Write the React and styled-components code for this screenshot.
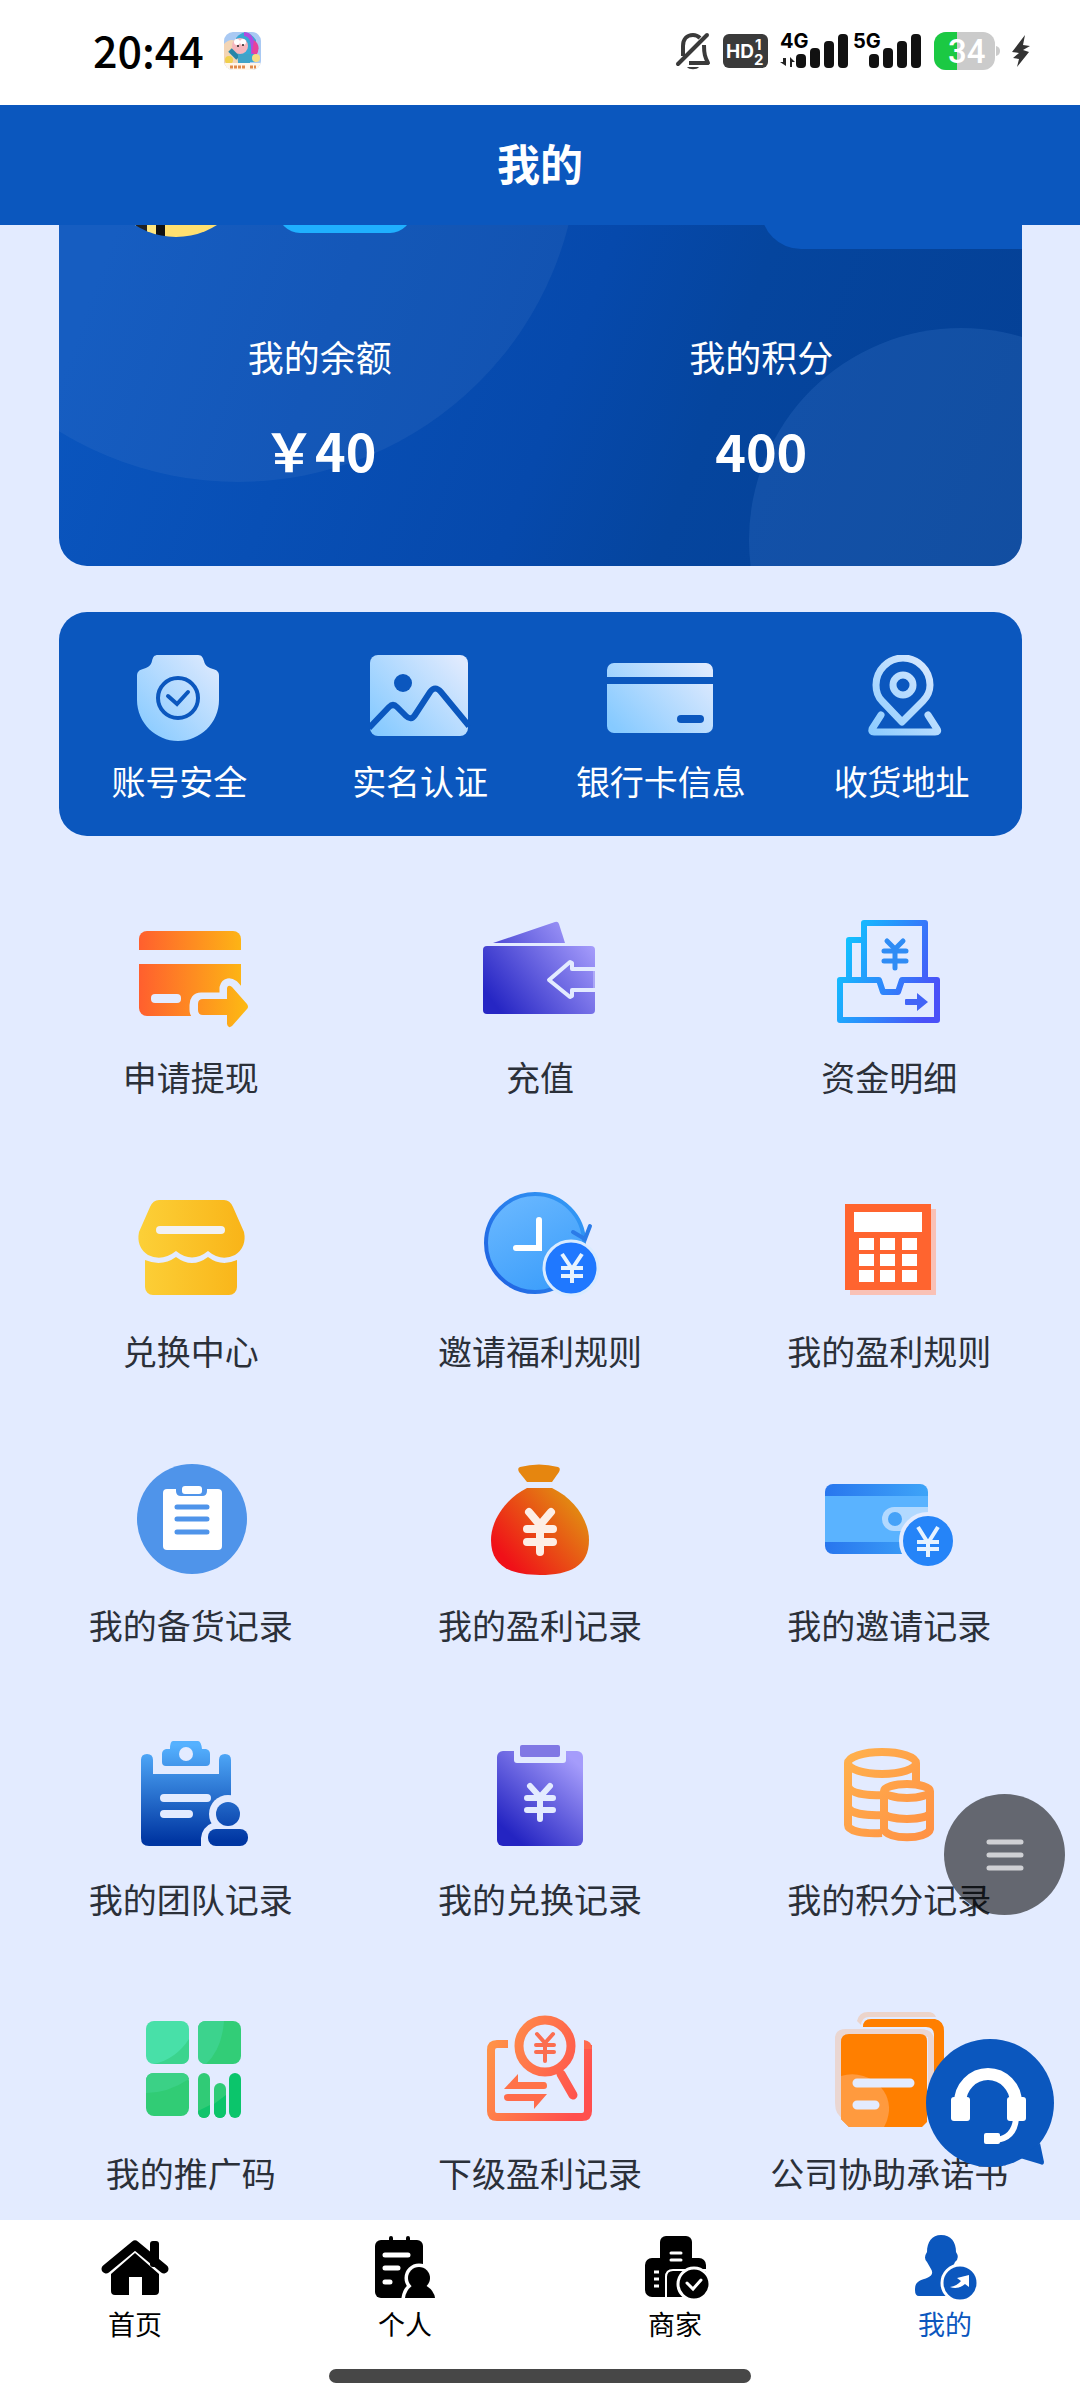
import React from "react";
import styled, { createGlobalStyle } from "styled-components";

const BG = "#e3ebff";
const BLUE = "#0b57be";

const GlobalStyle = createGlobalStyle`
  * {
    box-sizing: border-box;
  }
  body {
    margin: 0;
    background: ${BG};
    font-family: "Noto Sans CJK SC", "Noto Sans", sans-serif;
  }
  a {
    color: inherit;
    text-decoration: none;
  }
`;

/* ---------- shared drawing helpers ---------- */

const Grad = ({ id, from, to, x1 = 0, y1 = 0, x2 = 130, y2 = 0 }) => (
  <linearGradient id={id} gradientUnits="userSpaceOnUse" x1={x1} y1={y1} x2={x2} y2={y2}>
    <stop offset="0" stopColor={from} />
    <stop offset="1" stopColor={to} />
  </linearGradient>
);

// currency mark: two arms, two bars and a stem
const YenMark = ({ x, top, join, bars, bottom, arm, half, color, width, cap = "round" }) => (
  <g stroke={color} strokeWidth={width} strokeLinecap={cap} strokeLinejoin="round" fill="none">
    <path d={`M${x - arm} ${top}L${x} ${join}L${x + arm} ${top}M${x} ${join}V${bottom}`} />
    <path d={`M${x - half} ${bars[0]}H${x + half}M${x - half} ${bars[1]}H${x + half}`} />
  </g>
);

/* ---------- status bar ---------- */

const BellOff = () => (
  <svg width="36" height="38" viewBox="0 0 36 38" fill="none" stroke="#3a3a3a" strokeWidth="4">
    <path d="M3 32L32 3" strokeLinecap="round" />
    <path d="M8 24V14C8 7 12 3 18 3C21 3 23 4 25 6" />
    <path d="M29 13C29 22 30 25 33 31H14" strokeLinejoin="round" />
    <path d="M12 35H24C22 38 14 38 12 35Z" fill="#3a3a3a" stroke="none" />
  </svg>
);

const HdBadge = () => (
  <svg width="45" height="34" viewBox="0 0 45 34">
    <rect width="45" height="34" rx="6" fill="#3a3a3a" />
    <g fill="#fff" fontFamily="Inter, sans-serif" fontWeight="700">
      <text x="3" y="24" fontSize="19">HD</text>
      <text x="32" y="16" fontSize="15">1</text>
      <text x="31" y="31" fontSize="15">2</text>
    </g>
  </svg>
);

const Signal = ({ label, data }) => (
  <svg width="69" height="48" viewBox="0 -6 69 48">
    <text x="0" y="15" fontSize="20" fontWeight="700" fontFamily="Inter, sans-serif">
      {label}
    </text>
    {data && <path d="M3 25H6V33L0 29H3ZM10 34V24L15 29H12V34Z" fill="#222" />}
    <g fill="#111">
      <rect x="16" y="21" width="10" height="14" rx="4" />
      <rect x="30" y="15" width="10" height="20" rx="4" />
      <rect x="44" y="8" width="10" height="27" rx="4" />
      <rect x="58" y="1" width="10" height="34" rx="4" />
    </g>
  </svg>
);

const Battery = () => (
  <svg width="66" height="38" viewBox="0 0 66 38">
    <rect x="0" y="0" width="61" height="38" rx="12" fill="#cbcbcb" />
    <path d="M12 0H23V38H12A12 12 0 0 1 0 26V12A12 12 0 0 1 12 0Z" fill="#1bc943" />
    <path d="M62 14Q66 15 66 19Q66 23 62 24Z" fill="#cbcbcb" />
    <text x="14" y="31" fontSize="33" fontWeight="500" fill="#fff" fontFamily="Roboto, sans-serif">
      34
    </text>
  </svg>
);

const Bolt = () => (
  <svg width="18" height="34" viewBox="0 0 18 34">
    <path d="M13 1L0 18L7 19L1 24L7 25L5 33L17 18L11 16L18 12L11 11Z" fill="#333" />
  </svg>
);

const GameIcon = () => (
  <svg width="38" height="38" viewBox="0 0 38 38">
    <defs>
      <clipPath id="gameClip">
        <rect width="37" height="38" rx="9" />
      </clipPath>
    </defs>
    <g clipPath="url(#gameClip)">
      <rect width="38" height="38" fill="#a9c9f3" />
      <path d="M0 12Q8 4 14 12V34H0Z" fill="#f3d5b5" />
      <path d="M12 6Q22 -6 32 8V30H14Z" fill="#37a8d4" />
      <path d="M20 2Q30 2 29 22" stroke="#b04be0" strokeWidth="4" fill="none" />
      <path d="M30 8Q38 14 32 24L28 20Z" fill="#e6429b" />
      <circle cx="16" cy="14" r="8" fill="#f5b6bc" />
      <circle cx="13" cy="10" r="3" fill="#fff" />
      <circle cx="19" cy="10" r="3" fill="#fff" />
      <circle cx="14" cy="14" r="1" fill="#222" />
      <circle cx="19" cy="13" r="1" fill="#222" />
      <path d="M6 18L14 26" stroke="#2585a8" strokeWidth="5" />
      <rect x="14" y="22" width="12" height="10" fill="#3fa3c8" />
      <circle cx="5" cy="28" r="4" fill="#f0d04e" />
      <circle cx="32" cy="26" r="4" fill="#f6dc83" />
      <rect y="31" width="38" height="7" fill="#fff6ea" />
      <path d="M6 35H22M26 35H32" stroke="#e08a4a" strokeWidth="3" strokeDasharray="3 1" />
    </g>
  </svg>
);

/* ---------- quick panel icons ---------- */

const QuickGrad = ({ id }) => (
  <defs>
    <Grad id={id} from="#86caff" to="#dfeafe" x1={15} y1={80} x2={95} y2={5} />
  </defs>
);

const ShieldIcon = () => (
  <svg width="110" height="86" viewBox="0 0 110 86">
    <QuickGrad id="qShield" />
    <path
      d="M34 0H74C78 0 79 3 80 6C81 11 85 13 89 14C93 15 95 17 95 21V45C95 68 76 86 54 86C32 86 13 68 13 45V21C13 17 15 15 19 14C23 13 27 11 28 6C29 2 30 0 34 0Z"
      fill="url(#qShield)"
    />
    <circle cx="54" cy="43" r="20" fill="none" stroke={BLUE} strokeWidth="4" />
    <path d="M44 41L53 49L64 37" fill="none" stroke={BLUE} strokeWidth="4" strokeLinecap="round" />
  </svg>
);

const PhotoIcon = () => (
  <svg width="110" height="86" viewBox="0 0 110 86">
    <QuickGrad id="qPhoto" />
    <rect x="5" y="0" width="98" height="81" rx="8" fill="url(#qPhoto)" />
    <circle cx="38" cy="28" r="9" fill={BLUE} />
    <path
      d="M4 73L24 52Q28 48 32 52L41 61Q46 66 50 60L65 37Q70 30 76 37L104 71"
      fill="none"
      stroke={BLUE}
      strokeWidth="6"
    />
  </svg>
);

const BankCardIcon = () => (
  <svg width="110" height="86" viewBox="0 0 110 86">
    <QuickGrad id="qCard" />
    <path d="M8 8H99A7 7 0 0 1 107 15V22H1V15A7 7 0 0 1 8 8Z" fill="url(#qCard)" />
    <path d="M1 29H107V71A7 7 0 0 1 100 78H8A7 7 0 0 1 1 71Z" fill="url(#qCard)" />
    <rect x="71" y="60" width="27" height="8" rx="4" fill={BLUE} />
  </svg>
);

const PinIcon = () => (
  <svg width="110" height="86" viewBox="0 0 110 86">
    <QuickGrad id="qPin" />
    <g fill="none" stroke="url(#qPin)" strokeWidth="7" strokeLinejoin="round" strokeLinecap="round">
      <path d="M55 67L35 46C30 41 29 36 29 30A27 27 0 0 1 83 30C83 36 81 41 76 46Z" />
      <circle cx="56" cy="30" r="10" />
      <path d="M34 60L25 74Q24 77 27 77H88Q92 77 90 74L81 60" />
    </g>
  </svg>
);

/* ---------- menu icons, all on a 130 x 120 board ---------- */

const Board = ({ children }) => (
  <svg width="130" height="120" viewBox="0 0 130 120" overflow="visible">
    {children}
  </svg>
);

const WithdrawIcon = () => (
  <Board>
    <Grad id="gWithdraw" from="#ff5f2e" to="#fdb814" x1={13} x2={120} />
    <path d="M21 20H107A8 8 0 0 1 115 28V39H13V28A8 8 0 0 1 21 20Z" fill="url(#gWithdraw)" />
    <path d="M13 53H115V105H21A8 8 0 0 1 13 97Z" fill="url(#gWithdraw)" />
    <rect x="25" y="83" width="30" height="9" rx="4" fill={BG} />
    <path
      d="M75 89H101V77Q102 73 106 76L121 93Q123 96 121 98L106 115Q102 118 101 113V103H76Q71 103 71 99V94Q71 89 75 89Z"
      fill={BG}
      stroke={BG}
      strokeWidth="15"
      strokeLinejoin="round"
    />
    <path
      d="M77 88H101V77Q102 73 106 76L121 93Q123 96 121 98L106 115Q102 118 101 113V104H77Q72 104 72 99V93Q72 88 77 88Z"
      fill="url(#gWithdraw)"
    />
  </Board>
);

const RechargeIcon = () => (
  <Board>
    <Grad id="gWallet" from="#2626c4" to="#a59cfb" x1={25} y1={100} x2={115} y2={30} />
    <path d="M18 32L80 11Q83 10 84 13L90 32Z" fill="url(#gWallet)" />
    <rect x="8" y="35" width="112" height="68" rx="4" fill="url(#gWallet)" />
    <path
      d="M121 58H97V52L95 51L74 69L95 86L97 85V79H121"
      fill="none"
      stroke={BG}
      strokeWidth="4"
      strokeLinejoin="round"
    />
    <path d="M119 60V77" stroke="#c9c8fc" strokeWidth="1" />
  </Board>
);

const FundsIcon = () => (
  <Board>
    <Grad id="gFunds" from="#10c4ff" to="#4a50f8" x1={15} y1={40} x2={112} y2={80} />
    <g fill="none" stroke="url(#gFunds)" strokeWidth="6" strokeLinejoin="round">
      <path d="M40 69V12H101V69" />
      <path d="M25 69V29H40" />
      <path d="M16 69H55L59 81H74L78 69H113V109H16Z" />
    </g>
    <YenMark x={71} top={30} join={38} bars={[40, 50]} bottom={57} arm={8} half={11} width={5} color="#2f8cf5" />
    <path d="M82 88H93V82L104 91L93 100V94H82Q81 94 81 93V89Q81 88 82 88Z" fill="#4264f7" />
  </Board>
);

const StoreIcon = () => (
  <Board>
    <Grad id="gStore" from="#fcd038" to="#f9b418" x1={12} x2={119} />
    <path
      d="M33 15H98Q104 15 107 22L118 47Q121 62 109 70Q95 77 82 66Q66 79 50 66Q36 77 22 70Q10 62 13 47L24 22Q27 15 33 15Z"
      fill="url(#gStore)"
    />
    <rect x="30" y="41" width="69" height="8" rx="4" fill="#f1f1f4" />
    <path
      d="M19 75Q36 82 50 72Q66 84 82 72Q95 82 111 75V102A8 8 0 0 1 103 110H27A8 8 0 0 1 19 102Z"
      fill="url(#gStore)"
    />
  </Board>
);

const ClockIcon = () => (
  <Board>
    <Grad id="gClock" from="#1f63e2" to="#3298f5" x1={10} y1={90} x2={100} y2={20} />
    <Grad id="gFace" from="#6ab8ff" to="#3c9efb" x1={30} y1={10} x2={80} y2={105} />
    <circle cx="60" cy="58" r="49" fill="url(#gFace)" stroke="url(#gClock)" strokeWidth="4" />
    <path d="M64 35V63H41" fill="none" stroke="#fff" strokeWidth="6" strokeLinecap="round" />
    <path d="M98 47L110 54L115 41" fill="none" stroke="#2b7be8" strokeWidth="4" strokeLinecap="round" />
    <circle cx="96" cy="83" r="27" fill="#1f78ff" stroke="#d9ebff" strokeWidth="3" />
    <YenMark x={97} top={69} join={84} bars={[83, 91]} bottom={98} arm={10} half={11} width={4} color="#e6f3ff" cap="butt" />
  </Board>
);

const CalculatorIcon = () => (
  <Board>
    <rect x="26" y="24" width="86" height="86" fill="#f9c1b6" />
    <rect x="21" y="19" width="86" height="86" fill="#ff642f" />
    <rect x="30" y="27" width="68" height="20" fill="#fff" />
    {[53, 69, 85].map((y) =>
      [35, 56, 78].map((x) => <rect key={`${x}-${y}`} x={x} y={y} width="15" height="12" fill="#fff" />)
    )}
  </Board>
);

const StockIcon = () => (
  <Board>
    <circle cx="66" cy="60" r="55" fill="#4f94ea" />
    <rect x="37" y="30" width="59" height="61" rx="4" fill="#fff" />
    <path d="M50 29H81V32Q81 37 76 37H55Q50 37 50 32Z" fill="#4f94ea" />
    <rect x="56" y="27" width="20" height="8" rx="3" fill="#fff" />
    <path d="M51 48H81M51 60H81M51 73H81" stroke="#4f94ea" strokeWidth="5" strokeLinecap="round" />
  </Board>
);

const MoneyBagIcon = () => (
  <Board>
    <Grad id="gBag" from="#f01018" to="#e28a12" x1={30} y1={100} x2={98} y2={42} />
    <path d="M45 8Q64 3 83 8Q86 9 84 13L77 23H52L44 13Q42 9 45 8Z" fill="#e6860f" />
    <path
      d="M52 29H77C100 40 114 62 114 81C114 107 95 116 65 116C35 116 16 107 16 81C16 62 30 40 52 29Z"
      fill="url(#gBag)"
    />
    <YenMark x={65} top={53} join={66} bars={[70, 83]} bottom={93} arm={11} half={13} width={8} color="#fdeee6" />
  </Board>
);

const InviteIcon = () => (
  <Board>
    <Grad id="gInvite" from="#2876ee" to="#3ea4f8" x1={1} x2={104} />
    <rect x="1" y="25" width="103" height="70" rx="8" fill="url(#gInvite)" />
    <rect x="1" y="37" width="103" height="46" fill="#5ab3ff" />
    <path d="M104 48H70A12 12 0 0 0 70 72H104Z" fill="#b2d9ff" />
    <circle cx="71" cy="60" r="7" fill="#45a2f8" />
    <circle cx="104" cy="82" r="27" fill="#2584f8" stroke={BG} strokeWidth="4" />
    <YenMark x={104} top={68} join={84} bars={[83, 90]} bottom={98} arm={10} half={11} width={4} color="#e6f3ff" cap="butt" />
  </Board>
);

const TeamIcon = () => (
  <Board>
    <Grad id="gTeam" from="#55b1ff" to="#0036a2" x1={0} y1={12} x2={0} y2={108} />
    <path
      d="M21 21Q27 21 27 27V41H93V27Q93 21 99 21Q105 21 105 27V113H23Q15 113 15 105V27Q15 21 21 21Z"
      fill="url(#gTeam)"
    />
    <path
      d="M47 8H72Q75 8 76 16H80Q84 17 84 21V29Q84 33 80 33H40Q36 33 36 29V21Q36 17 40 16H44Q44 8 47 8Z"
      fill="url(#gTeam)"
    />
    <circle cx="60" cy="21" r="7" fill={BG} />
    <path d="M38 65H81M38 81H63" stroke={BG} strokeWidth="8" strokeLinecap="round" />
    <circle cx="102" cy="81" r="19" fill={BG} />
    <path d="M75 114V105Q76 94 88 89H115V114Z" fill={BG} />
    <circle cx="102" cy="81" r="12" fill="url(#gTeam)" />
    <rect x="82" y="96" width="40" height="17" rx="8" fill="url(#gTeam)" />
  </Board>
);

const ExchangeIcon = () => (
  <Board>
    <Grad id="gExchange" from="#2424c2" to="#a59cfb" x1={40} y1={105} x2={104} y2={32} />
    <rect x="22" y="18" width="86" height="95" rx="6" fill="url(#gExchange)" />
    <path d="M39 17H91V27Q91 30 88 30H42Q39 30 39 27Z" fill={BG} />
    <rect x="45" y="12" width="40" height="12" rx="2" fill="#8078e4" />
    <YenMark x={65} top={53} join={64} bars={[65, 77]} bottom={86} arm={10} half={13} width={6} color={BG} />
  </Board>
);

const CoinsIcon = () => (
  <Board>
    <Grad id="gCoins" from="#ffb14d" to="#ff9044" x1={20} y1={20} x2={110} y2={105} />
    <g fill="none" stroke="url(#gCoins)" strokeWidth="8">
      <ellipse cx="58" cy="30" rx="34" ry="11" />
      <path d="M24 30V92C24 98 38 101 58 100M92 30V50" />
      <path d="M24 53C26 60 40 63 60 62M24 74C26 80 40 83 60 82" />
      <ellipse cx="83" cy="58" rx="23" ry="7" fill={BG} />
      <path d="M60 58V96C62 107 104 107 106 96V58M60 80C64 88 102 88 106 80" />
    </g>
  </Board>
);

const PromoIcon = () => (
  <Board>
    <rect x="20" y="14" width="43" height="43" rx="8" fill="#48e0a8" />
    <path d="M63 32V49Q63 57 55 57H28Q50 52 63 32Z" fill="#3bd48e" />
    <rect x="72" y="14" width="43" height="43" rx="8" fill="#32cd77" />
    <path d="M80 14H98Q96 42 80 57Q72 57 72 49V22Q72 14 80 14Z" fill="#3cd38d" />
    <rect x="20" y="66" width="43" height="43" rx="8" fill="#31cc75" />
    <path d="M28 66H55Q62 66 63 72Q42 86 20 86V74Q20 66 28 66Z" fill="#3bd186" />
    <rect x="72" y="66" width="12" height="45" rx="6" fill="#30cb76" />
    <path d="M72 104L84 98V105A6 6 0 0 1 72 105Z" fill="#12c46c" />
    <rect x="88" y="76" width="12" height="35" rx="6" fill="#2fcb76" />
    <path d="M88 97L100 88V105A6 6 0 0 1 88 105Z" fill="#0cc46a" />
    <rect x="103" y="66" width="12" height="45" rx="6" fill="#0bc56b" />
  </Board>
);

const SubProfitIcon = () => (
  <Board>
    <Grad id="gSub" from="#ff9148" to="#ff4f4e" x1={14} y1={45} x2={108} y2={88} />
    <g fill="none" stroke="url(#gSub)" strokeWidth="8">
      <path d="M33 37H22Q16 37 16 43V104Q16 110 22 110H107Q113 110 113 104V38" />
      <circle cx="70" cy="39" r="26" strokeWidth="9" />
      <path d="M86 67L98 88" strokeWidth="9" strokeLinecap="round" />
    </g>
    <path d="M109 33Q117 34 117 42H109Z" fill="#ff6b4f" />
    <path d="M29 82L43 67V75H69Q72 75 72 79Q72 82 69 82Z" fill="#ff7249" />
    <path d="M72 87L59 102V94H33Q29 94 29 90Q29 87 33 87Z" fill="#ff6b4b" />
    <YenMark x={70} top={27} join={36} bars={[38, 45]} bottom={54} arm={8} half={9} width={4} color="#fb6d50" />
  </Board>
);

const CompanyIcon = () => (
  <Board>
    <path d="M33 14Q35 5 44 5H104Q110 5 112 10H45Q38 10 37 18Z" fill="#ecd4cb" />
    <path d="M39 20Q39 12 47 12H111Q120 14 120 24V90H110V28Q110 20 102 20Z" fill="#ff7f00" />
    <path d="M11 30Q12 22 22 22H96Q110 22 110 34V100H104V30H20V112Q11 108 11 96Z" fill="#ead6d2" />
    <path d="M25 27H96Q103 27 103 34V115L98 120H25L17 112V35Q17 27 25 27Z" fill="#ff7f00" />
    <path d="M17 69Q34 64 50 74Q66 86 65 104Q64 113 60 120H25L17 112Z" fill="#ff9a3e" />
    <path d="M33 76H86M33 98H51" stroke={BG} strokeWidth="9" strokeLinecap="round" />
  </Board>
);

/* ---------- tab bar icons ---------- */

const HomeTabIcon = () => (
  <svg width="76" height="66" viewBox="0 0 76 66">
    <rect x="53" y="7" width="9" height="26" rx="3" />
    <path d="M9 35L38 11L67 35" fill="none" stroke="#000" strokeWidth="9" strokeLinecap="round" strokeLinejoin="round" />
    <path d="M38 19L62 40V57Q62 61 58 61H45V43H32V61H18Q14 61 14 57V40Z" />
  </svg>
);

const PersonTabIcon = () => (
  <svg width="76" height="66" viewBox="0 0 76 66">
    <rect x="8" y="6" width="48" height="58" rx="6" />
    <path d="M24 4V10M41 4V10" stroke="#000" strokeWidth="4" strokeLinecap="round" />
    <path d="M18 21H41M18 34H31M18 48H23" stroke="#fff" strokeWidth="5" strokeLinecap="round" />
    <g stroke="#fff" strokeWidth="7">
      <circle cx="52" cy="44" r="11" />
      <path d="M38 64Q39 56 46 51H58Q67 56 68 64Z" />
    </g>
    <circle cx="52" cy="44" r="11" />
    <path d="M38 64Q39 56 46 51H58Q67 56 68 64Z" />
    <rect x="34" y="64" width="40" height="4" fill="#fff" />
  </svg>
);

const ShopTabIcon = () => (
  <svg width="76" height="66" viewBox="0 0 76 66">
    <rect x="23" y="2" width="32" height="40" rx="6" />
    <rect x="8" y="24" width="61" height="39" rx="7" />
    <path d="M34 19H44M34 26H44" stroke="#fff" strokeWidth="3" strokeLinecap="round" />
    <path d="M17 38H22M17 45H22M17 52H22" stroke="#fff" strokeWidth="3" />
    <path d="M29 64V43Q29 36 36 36H70" fill="none" stroke="#fff" strokeWidth="2" />
    <circle cx="57" cy="50" r="16" stroke="#fff" strokeWidth="3" />
    <path d="M50 49L56 55L64 46" fill="none" stroke="#fff" strokeWidth="3" strokeLinecap="round" />
  </svg>
);

const MineTabIcon = () => (
  <svg width="76" height="66" viewBox="0 0 76 66" fill={BLUE}>
    <path d="M34 1C44 1 49 8 49 18Q53 24 48 28Q45 35 42 37L40 62H12Q8 62 8 56C8 50 10 47 17 45C24 43 27 40 24 35L20 28Q16 24 20 18C20 8 25 1 34 1Z" />
    <circle cx="53" cy="49" r="18" stroke="#fff" strokeWidth="3" />
    <path d="M62 41V53L58 50Q51 56 43 53Q50 52 54 47L50 44Z" fill="#fff" />
  </svg>
);

/* ---------- floating buttons ---------- */

const MenuLines = () => (
  <svg width="38" height="32" viewBox="0 0 38 32" stroke="#cfd0d4" strokeWidth="5" strokeLinecap="round">
    <path d="M3 3H35M3 16H35M3 29H35" />
  </svg>
);

const HeadsetBubble = () => (
  <svg width="130" height="130" viewBox="0 0 130 130">
    <circle cx="64" cy="64" r="64" fill={BLUE} />
    <path d="M114 104L118 123Q118 127 114 125L94 119Z" fill={BLUE} />
    <path d="M34 64A28 29 0 0 1 90 64" fill="none" stroke="#fff" strokeWidth="12" />
    <rect x="25" y="58" width="19" height="24" rx="3" fill="#fff" />
    <rect x="81" y="58" width="19" height="24" rx="3" fill="#fff" />
    <path d="M90 80Q88 99 70 101" fill="none" stroke="#fff" strokeWidth="6" />
    <rect x="58" y="94" width="16" height="11" rx="2" fill="#fff" />
  </svg>
);

const quickLinks = [
  { label: "账号安全", icon: <ShieldIcon /> },
  { label: "实名认证", icon: <PhotoIcon /> },
  { label: "银行卡信息", icon: <BankCardIcon /> },
  { label: "收货地址", icon: <PinIcon /> },
];

const menuLinks = [
  { label: "申请提现", icon: <WithdrawIcon /> },
  { label: "充值", icon: <RechargeIcon /> },
  { label: "资金明细", icon: <FundsIcon /> },
  { label: "兑换中心", icon: <StoreIcon /> },
  { label: "邀请福利规则", icon: <ClockIcon /> },
  { label: "我的盈利规则", icon: <CalculatorIcon /> },
  { label: "我的备货记录", icon: <StockIcon /> },
  { label: "我的盈利记录", icon: <MoneyBagIcon /> },
  { label: "我的邀请记录", icon: <InviteIcon /> },
  { label: "我的团队记录", icon: <TeamIcon /> },
  { label: "我的兑换记录", icon: <ExchangeIcon /> },
  { label: "我的积分记录", icon: <CoinsIcon /> },
  { label: "我的推广码", icon: <PromoIcon /> },
  { label: "下级盈利记录", icon: <SubProfitIcon /> },
  { label: "公司协助承诺书", icon: <CompanyIcon /> },
];

const tabs = [
  { label: "首页", icon: <HomeTabIcon /> },
  { label: "个人", icon: <PersonTabIcon /> },
  { label: "商家", icon: <ShopTabIcon /> },
  { label: "我的", icon: <MineTabIcon />, active: true },
];

const App = () => {
  return (
    <Page>
      <GlobalStyle />
      <StatusBar>
        <StatusGroup $gap={20}>
          <Time>20:44</Time>
          <GameIcon />
        </StatusGroup>
        <StatusGroup $gap={12}>
          <BellOff />
          <HdBadge />
          <StatusGroup $gap={4}>
            <Signal label="4G" data />
            <Signal label="5G" />
          </StatusGroup>
          <Battery />
          <Bolt />
        </StatusGroup>
      </StatusBar>

      <Header>
        <h1>我的</h1>
      </Header>

      <Content>
        <BalanceCard>
          <Profile>
            <Avatar />
            <LevelPill />
            <SignTag />
          </Profile>
          <Stats>
            <Stat>
              <dt>我的余额</dt>
              <dd>￥40</dd>
            </Stat>
            <Stat>
              <dt>我的积分</dt>
              <dd>400</dd>
            </Stat>
          </Stats>
        </BalanceCard>

        <QuickPanel>
          {quickLinks.map((item) => (
            <QuickLink href="#" key={item.label}>
              {item.icon}
              <span>{item.label}</span>
            </QuickLink>
          ))}
        </QuickPanel>

        <MenuGrid>
          {menuLinks.map((item) => (
            <MenuLink href="#" key={item.label}>
              {item.icon}
              <span>{item.label}</span>
            </MenuLink>
          ))}
        </MenuGrid>
      </Content>

      <MenuButton type="button" aria-label="菜单">
        <MenuLines />
      </MenuButton>
      <ServiceButton type="button" aria-label="客服">
        <HeadsetBubble />
      </ServiceButton>

      <BottomBar>
        <Tabs>
          {tabs.map((tab) => (
            <Tab href="#" key={tab.label} $active={tab.active}>
              {tab.icon}
              <span>{tab.label}</span>
            </Tab>
          ))}
        </Tabs>
        <HomeIndicator />
      </BottomBar>
    </Page>
  );
};

const Page = styled.div`
  display: flex;
  flex-direction: column;
  min-height: 100vh;
  background: ${BG};

  svg {
    display: block;
    flex: none;
  }
`;

const StatusBar = styled.div`
  display: flex;
  align-items: center;
  justify-content: space-between;
  height: 105px;
  padding: 0 50px 3px 93px;
  background: #fff;
`;

const StatusGroup = styled.div`
  display: flex;
  align-items: center;
  gap: ${(props) => props.$gap}px;
`;

const Time = styled.span`
  padding-bottom: 4px;
  font-size: 43px;
  line-height: 52px;
  font-weight: 500;
  color: #000;
`;

const Header = styled.header`
  position: relative;
  z-index: 1;
  display: flex;
  align-items: center;
  justify-content: center;
  height: 120px;
  padding-bottom: 6px;
  background: ${BLUE};

  h1 {
    margin: 0;
    font-size: 43px;
    line-height: 60px;
    font-weight: 700;
    color: #fff;
  }
`;

const Content = styled.main`
  flex: 1;
  overflow: hidden;
`;

/* the list is scrolled, so the top of the card runs under the header */
const BalanceCard = styled.section`
  position: relative;
  overflow: hidden;
  margin: -160px 58px 0 59px;
  border-radius: 28px;
  background: linear-gradient(110deg, #0a55be 10%, #0649ac 54%, #05459e 68%, #044095 100%);

  &::before,
  &::after {
    content: "";
    position: absolute;
    border-radius: 50%;
    background: rgba(255, 255, 255, 0.05);
  }
  &::before {
    width: 682px;
    height: 682px;
    left: -162px;
    bottom: 84px;
  }
  &::after {
    width: 424px;
    height: 424px;
    right: -151px;
    bottom: -186px;
    background: rgba(120, 180, 255, 0.12);
  }
`;

const Profile = styled.div`
  position: relative;
  z-index: 1;
  display: flex;
  align-items: flex-end;
  height: 184px;
  padding-left: 41px;
`;

const Avatar = styled.div`
  width: 152px;
  height: 152px;
  margin-bottom: 12px;
  border-radius: 50%;
  background: linear-gradient(
    90deg,
    #ffe680 24%,
    #222 24% 31%,
    #ffe680 31% 37%,
    #111 37% 43%,
    #ffe070 43%
  );
`;

const LevelPill = styled.div`
  width: 134px;
  height: 44px;
  margin: 0 0 16px 26px;
  border-radius: 22px;
  background: #1fb0ff;
`;

const SignTag = styled.div`
  width: 261px;
  height: 80px;
  margin-left: auto;
  border-radius: 40px 0 0 40px;
  background: ${BLUE};
`;

const Stats = styled.dl`
  position: relative;
  z-index: 1;
  display: grid;
  grid-template-columns: 1fr 1fr;
  margin: 0;
  padding: 83px 40px 84px;
`;

const Stat = styled.div`
  text-align: center;
  color: #fff;

  dt {
    font-size: 36px;
    line-height: 48px;
  }
  dd {
    margin: 38px 0 0;
    font-size: 52px;
    line-height: 64px;
    font-weight: 700;
  }
`;

const QuickPanel = styled.nav`
  display: grid;
  grid-template-columns: repeat(4, 1fr);
  margin: 46px 58px 0 59px;
  padding: 43px 0 33px;
  border-radius: 28px;
  background: ${BLUE};
`;

const QuickLink = styled.a`
  display: flex;
  flex-direction: column;
  align-items: center;
  gap: 18px;
  font-size: 34px;
  line-height: 44px;
  white-space: nowrap;

  span {
    color: #fff;
  }
`;

const MenuGrid = styled.nav`
  display: grid;
  grid-template-columns: repeat(3, 1fr);
  row-gap: 85px;
  padding: 75px 16px 24px;
`;

const MenuLink = styled.a`
  display: flex;
  flex-direction: column;
  align-items: center;
  gap: 24px;
  font-size: 34px;
  line-height: 44px;
  padding-bottom: 1px;
  white-space: nowrap;

  span {
    color: #2b3039;
  }
`;

const FloatButton = styled.button`
  position: fixed;
  z-index: 2;
  display: flex;
  align-items: center;
  justify-content: center;
  padding: 0;
  border: 0;
  border-radius: 50%;
  cursor: pointer;
`;

const MenuButton = styled(FloatButton)`
  right: 15px;
  bottom: 485px;
  width: 121px;
  height: 121px;
  background: rgba(0, 0, 0, 0.56);
`;

const ServiceButton = styled(FloatButton)`
  right: 24px;
  bottom: 231px;
  width: 130px;
  height: 130px;
  background: none;
`;

const BottomBar = styled.footer`
  display: flex;
  flex-direction: column;
  align-items: center;
  padding: 14px 0 17px;
  background: #fff;
`;

const Tabs = styled.nav`
  display: grid;
  grid-template-columns: repeat(4, 1fr);
  width: 100%;
`;

const Tab = styled.a`
  display: flex;
  flex-direction: column;
  align-items: center;
  gap: 7px;
  font-size: 27px;
  line-height: 34px;

  span {
    color: ${(props) => (props.$active ? BLUE : "#000")};
  }
`;

const HomeIndicator = styled.div`
  width: 39%;
  height: 14px;
  margin-top: 28px;
  border-radius: 7px;
  background: #474747;
`;

export default App;
